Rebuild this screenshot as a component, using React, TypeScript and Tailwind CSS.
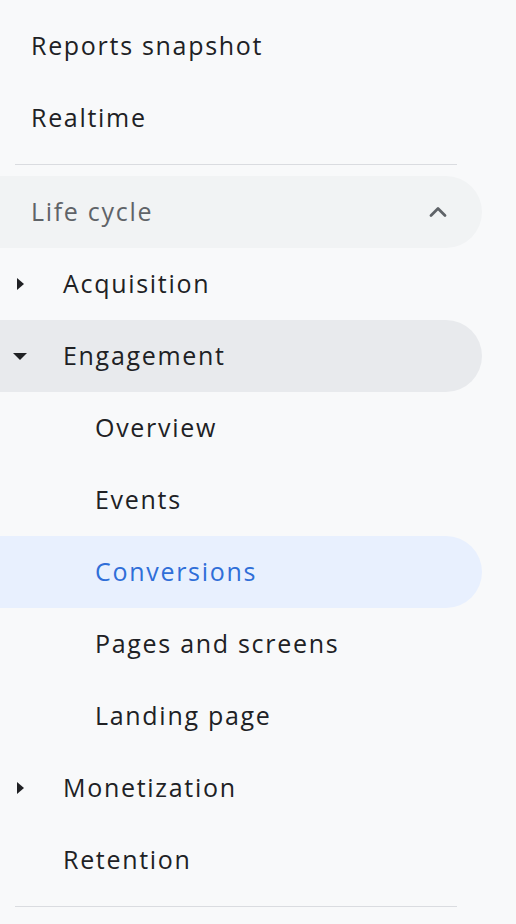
import { ChevronUp } from "lucide-react";

type Item = {
  label: string;
  level: number;
  caret?: "right" | "down";
  active?: boolean;
  open?: boolean;
};

const items: Item[] = [
  { label: "Acquisition", level: 1, caret: "right" },
  { label: "Engagement", level: 1, caret: "down", open: true },
  { label: "Overview", level: 2 },
  { label: "Events", level: 2 },
  { label: "Conversions", level: 2, active: true },
  { label: "Pages and screens", level: 2 },
  { label: "Landing page", level: 2 },
  { label: "Monetization", level: 1, caret: "right" },
  { label: "Retention", level: 1 },
];

function Caret({ dir }: { dir: "right" | "down" }) {
  if (dir === "right") {
    return (
      <svg width="8" height="12" viewBox="0 0 8 12" className="absolute left-[17px] top-[30px]">
        <path d="M0 0 L7 6 L0 12 Z" fill="#202124" />
      </svg>
    );
  }
  return (
    <svg width="14" height="8" viewBox="0 0 14 8" className="absolute left-[13px] top-[33px]">
      <path d="M0 0 L14 0 L7 7 Z" fill="#202124" />
    </svg>
  );
}

export default function App() {
  return (
    <div className="w-[516px] h-[924px] bg-[#f8f9fa] pt-[10px] overflow-hidden font-['Open_Sans',Roboto,sans-serif] font-medium tracking-[1.7px]">
      <div className="h-[72px] flex items-center pl-[31px] text-[25px] text-[#202124]">Reports snapshot</div>
      <div className="h-[72px] flex items-center pl-[31px] text-[25px] text-[#202124]">Realtime</div>
      <div className="mt-[10px] mb-[11px] ml-[15px] w-[442px] h-px bg-[#dadce0]" />

      <div className="h-[72px] w-[482px] rounded-r-full bg-[#f1f3f4] flex items-center justify-between pl-[31px] pr-[30px] text-[25px] text-[#5f6368]">
        <span>Life cycle</span>
        <ChevronUp size={28} strokeWidth={2.4} className="text-[#5f6368]" />
      </div>

      {items.map((it) => (
        <div
          key={it.label}
          className={
            "relative h-[72px] w-[482px] rounded-r-full flex items-center text-[25px] " +
            (it.level === 1 ? "pl-[63px] " : "pl-[95px] ") +
            (it.active
              ? "bg-[#e8f0fe] text-[#2f6ed8]"
              : it.open
              ? "bg-[#e8eaed] text-[#202124]"
              : "text-[#202124]")
          }
        >
          {it.caret && <Caret dir={it.caret} />}
          {it.label}
        </div>
      ))}

      <div className="mt-[10px] ml-[15px] w-[442px] h-px bg-[#dadce0]" />
    </div>
  );
}
